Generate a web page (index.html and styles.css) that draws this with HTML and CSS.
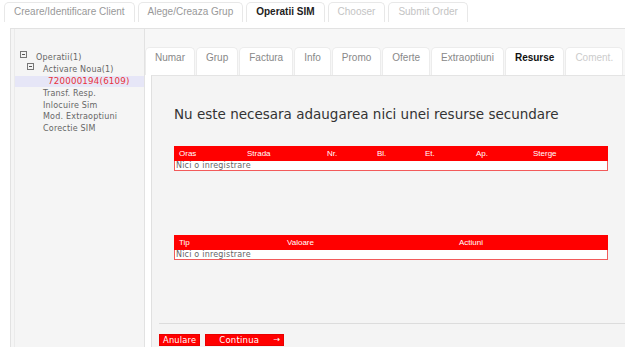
FILE: index.html
```html
<!DOCTYPE html>
<html>
<head>
  <title>Operatii SIM</title>
  <meta charset="UTF-8">
  <link rel="stylesheet" href="styles.css">
</head>
<body>
  <div class="top-tabs">
    <div class="top-tab">Creare/Identificare Client</div>
    <div class="top-tab">Alege/Creaza Grup</div>
    <div class="top-tab active">Operatii SIM</div>
    <div class="top-tab disabled">Chooser</div>
    <div class="top-tab disabled">Submit Order</div>
  </div>

  <div class="main">
    <div class="tree">
      <div class="tree-row level-0"><span class="toggle"></span>Operatii(1)</div>
      <div class="tree-row level-1"><span class="toggle"></span>Activare Noua(1)</div>
      <div class="tree-row level-2 selected">720000194(6109)</div>
      <div class="tree-row level-2b">Transf. Resp.</div>
      <div class="tree-row level-2b">Inlocuire Sim</div>
      <div class="tree-row level-2b">Mod. Extraoptiuni</div>
      <div class="tree-row level-2b">Corectie SIM</div>
    </div>

    <div class="content">
      <div class="sub-tabs">
        <div class="sub-tab">Numar</div>
        <div class="sub-tab">Grup</div>
        <div class="sub-tab">Factura</div>
        <div class="sub-tab">Info</div>
        <div class="sub-tab">Promo</div>
        <div class="sub-tab">Oferte</div>
        <div class="sub-tab">Extraoptiuni</div>
        <div class="sub-tab active">Resurse</div>
        <div class="sub-tab disabled">Coment.</div>
      </div>

      <div class="panel-wrap">
        <div class="panel">
          <div class="panel-body">
            <h2 class="notice">Nu este necesara adaugarea nici unei resurse secundare</h2>

            <table class="grid grid-address">
              <colgroup>
                <col class="c-oras"><col class="c-strada"><col class="c-nr"><col class="c-bl"><col class="c-et"><col class="c-ap"><col>
              </colgroup>
              <thead>
                <tr><th>Oras</th><th>Strada</th><th>Nr.</th><th>Bl.</th><th>Et.</th><th>Ap.</th><th>Sterge</th></tr>
              </thead>
              <tbody>
                <tr><td colspan="7">Nici o inregistrare</td></tr>
              </tbody>
            </table>

            <table class="grid grid-values">
              <colgroup>
                <col class="c-tip"><col class="c-valoare"><col>
              </colgroup>
              <thead>
                <tr><th>Tip</th><th>Valoare</th><th>Actiuni</th></tr>
              </thead>
              <tbody>
                <tr><td colspan="3">Nici o inregistrare</td></tr>
              </tbody>
            </table>
          </div>

          <div class="panel-footer">
            <button class="red-btn">Anulare</button>
            <button class="red-btn next-btn">Continua <span class="arrow">&rarr;</span></button>
          </div>
        </div>
      </div>
    </div>
  </div>
</body>
</html>
```

FILE: styles.css
```css
body {
  margin: 0;
  width: 625px;
  height: 347px;
  overflow: hidden;
  background-color: #fff;
  font-family: "DejaVu Sans", Verdana, sans-serif;
}
.top-tabs {
  display: flex;
  gap: 3px;
  height: 28px;
  padding: 2px 0 0 4px;
  box-sizing: border-box;
}
.top-tab {
  height: 19px;
  line-height: 18px;
  padding: 0 9px;
  border: 1px solid #e8e8e8;
  border-bottom: none;
  border-radius: 5px 5px 0 0;
  background-color: #fff;
  font-family: "Liberation Sans", Arial, sans-serif;
  font-size: 10px;
  color: #999;
}
.top-tab.active {
  color: #222;
  font-weight: bold;
}
.top-tab.disabled {
  color: #c4c4c4;
}
.main {
  display: flex;
  margin-left: 10px;
  height: 319px;
  border: 1px solid #e2e2e2;
  border-right: none;
  background-color: #f5f5f5;
}
.tree {
  flex-shrink: 0;
  width: 129px;
  margin-left: 3px;
  padding-top: 23px;
  border-left: 1px solid #ebebeb;
  border-right: 1px solid #e2e2e2;
  font-size: 8px;
  color: #666;
  letter-spacing: 0.2px;
}
.tree-row {
  display: flex;
  align-items: center;
  height: 11.8px;
}
.toggle {
  width: 5px;
  height: 5px;
  border: 1px solid #777;
  margin-right: 9px;
  position: relative;
  top: -3px;
}
.toggle:after {
  content: "";
  display: block;
  margin: 2px 1px 0;
  height: 1px;
  background: #555;
}
.level-0 { padding-left: 5px; }
.level-1 { padding-left: 12px; }
.level-2 { padding-left: 33px; }
.level-2b { padding-left: 28px; }
.tree-row.selected {
  background-color: #e6e6f7;
  color: #e8303a;
  font-size: 8.7px;
}
.content {
  flex: 1;
  min-width: 0;
  display: flex;
  flex-direction: column;
}
.sub-tabs {
  display: flex;
  gap: 1px;
  height: 46px;
  padding-top: 18px;
  box-sizing: border-box;
  background-color: #f7f7f7;
}
.sub-tab {
  flex-shrink: 0;
  height: 28px;
  padding: 4px 9px 0;
  box-sizing: border-box;
  background-color: #fff;
  border: 1px solid #ececec;
  border-bottom: none;
  border-radius: 5px 5px 0 0;
  font-family: "Liberation Sans", Arial, sans-serif;
  font-size: 10px;
  line-height: 12px;
  color: #888;
}
.sub-tab.active {
  color: #111;
  font-weight: bold;
}
.sub-tab.disabled {
  color: #ccc;
}
.panel-wrap {
  flex: 1;
  padding-left: 6px;
  background-color: #fff;
}
.panel {
  height: 100%;
  background-color: #f4f4f4;
  border-left: 1px solid #e0e0e0;
  border-top: 1px solid #e4e4e4;
}
.panel-body {
  height: 247px;
  padding: 30px 0 0 22px;
  box-sizing: border-box;
}
.notice {
  margin: 0;
  font-size: 13.5px;
  line-height: 16px;
  font-weight: normal;
  color: #333;
}
.grid {
  width: 434px;
  table-layout: fixed;
  border-collapse: collapse;
  margin-top: 24px;
}
.grid-values {
  margin-top: 64px;
}
.grid th {
  height: 13px;
  padding: 0 0 0 4px;
  background-color: #ff0000;
  border: 1px solid #ff0000;
  color: #fff;
  font-family: "Liberation Sans", Arial, sans-serif;
  font-size: 8px;
  font-weight: normal;
  text-align: left;
}
.grid td {
  height: 9px;
  padding: 0 0 0 1px;
  background-color: #fff;
  border: 1px solid #f25a5a;
  font-size: 8px;
  line-height: 9px;
  color: #666;
  letter-spacing: 0.2px;
}
.c-oras { width: 68px; }
.c-strada { width: 80px; }
.c-nr { width: 50px; }
.c-bl { width: 48px; }
.c-et { width: 51px; }
.c-ap { width: 57px; }
.c-tip { width: 108px; }
.c-valoare { width: 172px; }
.panel-footer {
  display: flex;
  gap: 5px;
  margin-left: 7px;
  padding-top: 10px;
  border-top: 1px solid #dcdcdc;
}
.red-btn {
  height: 12px;
  padding: 0 3px;
  border: 1px solid #e80000;
  background-color: #ff0000;
  color: #fff;
  font-family: "DejaVu Sans", Verdana, sans-serif;
  font-size: 8.3px;
  line-height: 10px;
  letter-spacing: 0.2px;
  cursor: pointer;
}
.next-btn {
  display: flex;
  justify-content: space-between;
  width: 79px;
  padding: 0 3px 0 13px;
  font-size: 8.5px;
}
.arrow {
  font-size: 8px;
}
```
